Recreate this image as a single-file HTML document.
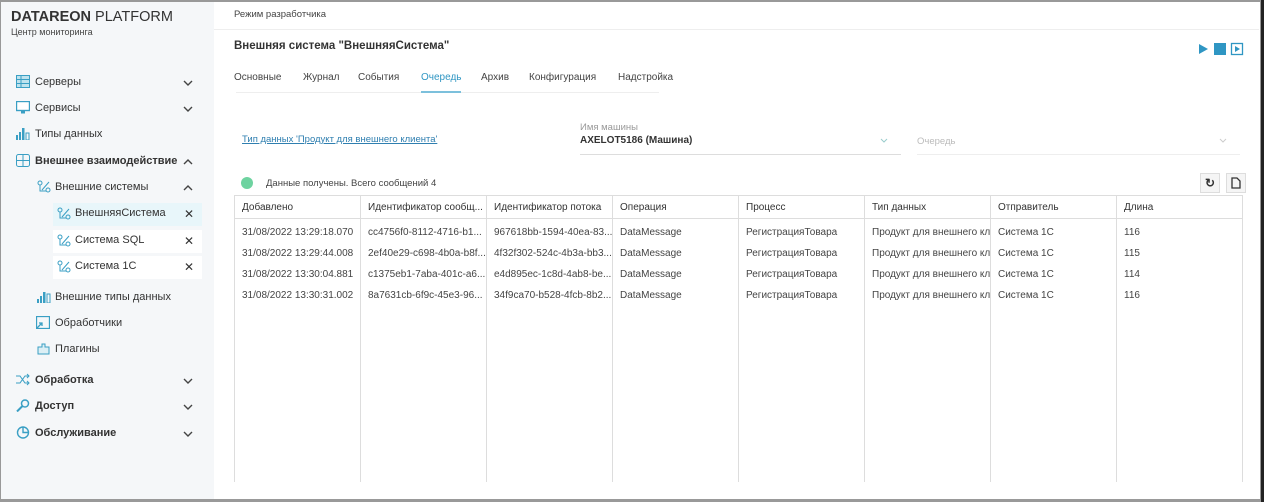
<!DOCTYPE html>
<html><head><meta charset="utf-8"><style>
*{box-sizing:border-box;margin:0;padding:0}
body{width:1264px;height:502px;overflow:hidden;background:#999;font-family:"Liberation Sans",sans-serif;color:#333;position:relative}
#frame{position:absolute;left:1px;top:2px;width:1259px;height:497px;background:#fff;overflow:hidden}
#side{position:absolute;left:0;top:0;width:213px;height:497px;background:#f5f7f9}
.abs{position:absolute;white-space:nowrap}
.logo{left:10px;top:7px;font-size:14.5px;color:#333}
.logo b{font-weight:bold}
.sub{left:10px;top:25px;font-size:9px;color:#444}
.it{font-size:11px;color:#333}
.ic{position:absolute;width:14px;height:13px}
.chev{position:absolute;width:10px;height:10px}
.sel{position:absolute;background:#fff}
.x{font-size:12px;color:#333}
.tab{top:70px;font-size:10px;color:#444}
table{position:absolute;left:233px;top:193px;border-collapse:collapse;font-size:10px;color:#444}
td{height:21px;padding:0 7px;border-left:1px solid #ddd;border-right:1px solid #ddd;white-space:nowrap;overflow:hidden;max-width:126px}
tr.h td{height:23px;border-top:1px solid #ddd;border-bottom:1px solid #ddd;color:#333}
tr.f td{padding-top:4px}
</style></head><body><div id="frame">
<div id="side">
<div class="abs logo"><b>DATAREON</b> PLATFORM</div>
<div class="abs sub">Центр мониторинга</div>

<svg class="ic" style="left:15px;top:73px" viewBox="0 0 14 13"><rect x="0.5" y="0.5" width="13" height="12" fill="#bfe3ee" stroke="#3a9fc4"/><line x1="1" y1="4.5" x2="13" y2="4.5" stroke="#3a9fc4"/><line x1="1" y1="8.5" x2="13" y2="8.5" stroke="#3a9fc4"/><line x1="5" y1="1" x2="5" y2="12" stroke="#3a9fc4"/></svg>
<div class="abs it" style="left:34px;top:74px">Серверы</div>
<svg class="ic" style="left:15px;top:99px" viewBox="0 0 14 13"><rect x="0.5" y="0.5" width="13" height="9" fill="#fff" stroke="#3a9fc4" stroke-width="1.4"/><rect x="5" y="10" width="4" height="2.5" fill="#3a9fc4"/></svg>
<div class="abs it" style="left:34px;top:100px">Сервисы</div>
<svg class="ic" style="left:15px;top:125px" viewBox="0 0 14 13"><rect x="0" y="8" width="2" height="5" fill="#3a9fc4"/><rect x="3" y="5" width="2" height="8" fill="#3a9fc4"/><rect x="6" y="1" width="2.5" height="12" fill="#3a9fc4"/><rect x="10" y="6" width="3" height="7" fill="none" stroke="#3a9fc4"/></svg>
<div class="abs it" style="left:34px;top:126px">Типы данных</div>
<svg class="ic" style="left:15px;top:152px" viewBox="0 0 14 13"><rect x="0.5" y="0.5" width="13" height="12" rx="2" fill="none" stroke="#3a9fc4"/><line x1="1" y1="6.5" x2="13" y2="6.5" stroke="#3a9fc4"/><line x1="7" y1="1" x2="7" y2="12" stroke="#3a9fc4"/></svg>
<div class="abs it" style="left:34px;top:153px;font-weight:bold">Внешнее взаимодействие</div>

<svg class="ic" style="left:36px;top:178px" viewBox="0 0 14 13"><circle cx="3" cy="3" r="2" fill="none" stroke="#3a9fc4"/><circle cx="11" cy="10" r="2" fill="none" stroke="#3a9fc4"/><path d="M3 5V11H9M5 10L12 2" fill="none" stroke="#3a9fc4"/></svg>
<div class="abs it" style="left:54px;top:179px">Внешние системы</div>

<div class="sel" style="left:52px;top:201px;width:149px;height:23px;background:#e8f6fa"></div>
<div class="sel" style="left:52px;top:228px;width:149px;height:23px"></div>
<div class="sel" style="left:52px;top:254px;width:149px;height:23px"></div>
<svg class="ic" style="left:56px;top:205px" viewBox="0 0 14 13"><circle cx="3" cy="3" r="2" fill="none" stroke="#3a9fc4"/><circle cx="11" cy="10" r="2" fill="none" stroke="#3a9fc4"/><path d="M3 5V11H9M5 10L12 2" fill="none" stroke="#3a9fc4"/></svg>
<div class="abs it" style="left:74px;top:205px">ВнешняяСистема</div>
<svg class="ic" style="left:56px;top:232px" viewBox="0 0 14 13"><circle cx="3" cy="3" r="2" fill="none" stroke="#3a9fc4"/><circle cx="11" cy="10" r="2" fill="none" stroke="#3a9fc4"/><path d="M3 5V11H9M5 10L12 2" fill="none" stroke="#3a9fc4"/></svg>
<div class="abs it" style="left:74px;top:232px">Система SQL</div>
<svg class="ic" style="left:56px;top:258px" viewBox="0 0 14 13"><circle cx="3" cy="3" r="2" fill="none" stroke="#3a9fc4"/><circle cx="11" cy="10" r="2" fill="none" stroke="#3a9fc4"/><path d="M3 5V11H9M5 10L12 2" fill="none" stroke="#3a9fc4"/></svg>
<div class="abs it" style="left:74px;top:258px">Система 1С</div>
<div class="abs x" style="left:183px;top:205px">✕</div>
<div class="abs x" style="left:183px;top:232px">✕</div>
<div class="abs x" style="left:183px;top:258px">✕</div>

<svg class="ic" style="left:36px;top:288px" viewBox="0 0 14 13"><rect x="0" y="9" width="2" height="4" fill="#3a9fc4"/><rect x="3" y="6" width="2" height="7" fill="#3a9fc4"/><rect x="6" y="2" width="2.5" height="11" fill="#3a9fc4"/><rect x="10" y="4" width="3" height="9" fill="none" stroke="#3a9fc4"/></svg>
<div class="abs it" style="left:54px;top:289px">Внешние типы данных</div>
<svg class="ic" style="left:35px;top:314px" viewBox="0 0 14 13"><rect x="0.5" y="0.5" width="13" height="12" fill="none" stroke="#3a9fc4" stroke-width="1.3"/><path d="M1 12L6 7M3 7H6V10" fill="none" stroke="#3a9fc4" stroke-width="1.3"/></svg>
<div class="abs it" style="left:54px;top:315px">Обработчики</div>
<svg class="ic" style="left:36px;top:340px" viewBox="0 0 14 13"><path d="M1 5H5V2H8V5H12V12H1Z" fill="#dceff5" stroke="#3a9fc4"/></svg>
<div class="abs it" style="left:54px;top:341px">Плагины</div>

<svg class="ic" style="left:15px;top:371px" viewBox="0 0 14 13"><path d="M0 3H4L9 10H13M0 10H4L9 3H13M11 1L13 3L11 5M11 8L13 10L11 12" fill="none" stroke="#3a9fc4"/></svg>
<div class="abs it" style="left:34px;top:372px;font-weight:bold">Обработка</div>
<svg class="ic" style="left:15px;top:397px" viewBox="0 0 14 13"><circle cx="9" cy="4.5" r="3.5" fill="none" stroke="#3a9fc4" stroke-width="1.5"/><line x1="6.5" y1="7" x2="1" y2="12.5" stroke="#3a9fc4" stroke-width="2"/></svg>
<div class="abs it" style="left:34px;top:398px;font-weight:bold">Доступ</div>
<svg class="ic" style="left:15px;top:424px" viewBox="0 0 14 13"><circle cx="7" cy="6.5" r="5.5" fill="none" stroke="#3a9fc4" stroke-width="1.4"/><path d="M7 1V6.5H12.5" fill="none" stroke="#3a9fc4" stroke-width="1.4"/></svg>
<div class="abs it" style="left:34px;top:425px;font-weight:bold">Обслуживание</div>

<svg class="chev" style="left:182px;top:76px" viewBox="0 0 10 10"><path d="M1 3L5 7L9 3" fill="none" stroke="#444" stroke-width="1.4"/></svg>
<svg class="chev" style="left:182px;top:102px" viewBox="0 0 10 10"><path d="M1 3L5 7L9 3" fill="none" stroke="#444" stroke-width="1.4"/></svg>
<svg class="chev" style="left:182px;top:155px" viewBox="0 0 10 10"><path d="M1 7L5 3L9 7" fill="none" stroke="#444" stroke-width="1.4"/></svg>
<svg class="chev" style="left:182px;top:181px" viewBox="0 0 10 10"><path d="M1 7L5 3L9 7" fill="none" stroke="#444" stroke-width="1.4"/></svg>
<svg class="chev" style="left:182px;top:374px" viewBox="0 0 10 10"><path d="M1 3L5 7L9 3" fill="none" stroke="#444" stroke-width="1.4"/></svg>
<svg class="chev" style="left:182px;top:400px" viewBox="0 0 10 10"><path d="M1 3L5 7L9 3" fill="none" stroke="#444" stroke-width="1.4"/></svg>
<svg class="chev" style="left:182px;top:427px" viewBox="0 0 10 10"><path d="M1 3L5 7L9 3" fill="none" stroke="#444" stroke-width="1.4"/></svg>
</div>

<div class="abs" style="left:233px;top:7px;font-size:9.5px;color:#444">Режим разработчика</div>
<div class="abs" style="left:213px;top:27px;width:1045px;height:1px;background:#eee"></div>
<div class="abs" style="left:233px;top:38px;font-size:11.5px;font-weight:bold;color:#333">Внешняя система "ВнешняяСистема"</div>
<svg class="abs" style="left:1196px;top:40px" width="48" height="14" viewBox="0 0 48 14"><path d="M2 2L11 7L2 12Z" fill="#2f96c3"/><rect x="17" y="1" width="12" height="12" fill="#2f96c3"/><rect x="34.5" y="1.5" width="11" height="11" fill="none" stroke="#2f96c3" stroke-width="1.3"/><path d="M38 4L43 7L38 10Z" fill="#2f96c3"/></svg>

<div class="abs tab" style="left:233px">Основные</div>
<div class="abs tab" style="left:302px">Журнал</div>
<div class="abs tab" style="left:357px">События</div>
<div class="abs tab" style="left:420px;color:#2f96c3">Очередь</div>
<div class="abs tab" style="left:480px">Архив</div>
<div class="abs tab" style="left:528px">Конфигурация</div>
<div class="abs tab" style="left:617px">Надстройка</div>
<div class="abs" style="left:235px;top:90px;width:423px;height:1px;background:#eee"></div>
<div class="abs" style="left:420px;top:89px;width:40px;height:2px;background:#7cc0dc"></div>

<div class="abs" style="left:241px;top:132px;font-size:9.5px;color:#2f7fb0;text-decoration:underline">Тип данных 'Продукт для внешнего клиента'</div>
<div class="abs" style="left:579px;top:120px;font-size:9.5px;color:#999">Имя машины</div>
<div class="abs" style="left:579px;top:133px;font-size:10px;font-weight:bold;color:#333">AXELOT5186 (Машина)</div>
<div class="abs" style="left:579px;top:152px;width:321px;height:1px;background:#ddd"></div>
<svg class="chev" style="left:878px;top:134px" viewBox="0 0 10 10"><path d="M2 3L5 6L8 3" fill="none" stroke="#9cc" stroke-width="1"/></svg>
<div class="abs" style="left:916px;top:134px;font-size:9.5px;color:#bbb">Очередь</div>
<div class="abs" style="left:916px;top:152px;width:323px;height:1px;background:#eee"></div>
<svg class="chev" style="left:1217px;top:134px" viewBox="0 0 10 10"><path d="M2 3L5 6L8 3" fill="none" stroke="#ccc" stroke-width="1"/></svg>

<div class="abs" style="left:240px;top:175px;width:12px;height:12px;border-radius:50%;background:#6ed3a0"></div>
<div class="abs" style="left:265px;top:176px;font-size:9.5px;color:#444">Данные получены. Всего сообщений 4</div>
<div class="abs" style="left:1199px;top:171px;width:20px;height:20px;background:#f5f5f5;border:1px solid #ddd;font-size:12px;text-align:center;line-height:18px;font-weight:bold">↻</div>
<svg class="abs" style="left:1225px;top:171px" width="20" height="20" viewBox="0 0 20 20"><rect x="0.5" y="0.5" width="19" height="19" fill="#f5f5f5" stroke="#ddd"/><path d="M6 5H11L14 8V15H6Z" fill="none" stroke="#333" stroke-width="1.3"/></svg>

<table>
<tr class="h"><td style="width:128px">Добавлено</td><td style="width:126px">Идентификатор сообщ...</td><td style="width:125px">Идентификатор потока</td><td style="width:127px">Операция</td><td style="width:126px">Процесс</td><td style="width:127px">Тип данных</td><td style="width:126px">Отправитель</td><td style="width:126px">Длина</td></tr>
<tr class="f"><td style="height:24px">31/08/2022 13:29:18.070</td><td>cc4756f0-8112-4716-b1...</td><td>967618bb-1594-40ea-83...</td><td>DataMessage</td><td>РегистрацияТовара</td><td>Продукт для внешнего кл</td><td>Система 1С</td><td>116</td></tr>
<tr><td>31/08/2022 13:29:44.008</td><td>2ef40e29-c698-4b0a-b8f...</td><td>4f32f302-524c-4b3a-bb3...</td><td>DataMessage</td><td>РегистрацияТовара</td><td>Продукт для внешнего кл</td><td>Система 1С</td><td>115</td></tr>
<tr><td>31/08/2022 13:30:04.881</td><td>c1375eb1-7aba-401c-a6...</td><td>e4d895ec-1c8d-4ab8-be...</td><td>DataMessage</td><td>РегистрацияТовара</td><td>Продукт для внешнего кл</td><td>Система 1С</td><td>114</td></tr>
<tr><td>31/08/2022 13:30:31.002</td><td>8a7631cb-6f9c-45e3-96...</td><td>34f9ca70-b528-4fcb-8b2...</td><td>DataMessage</td><td>РегистрацияТовара</td><td>Продукт для внешнего кл</td><td>Система 1С</td><td>116</td></tr>
<tr><td style="height:176px"></td><td></td><td></td><td></td><td></td><td></td><td></td><td></td></tr>
</table>
</div>
<div class="abs" style="left:1261px;top:0;width:3px;height:502px;background:#222"></div>
</body></html>
